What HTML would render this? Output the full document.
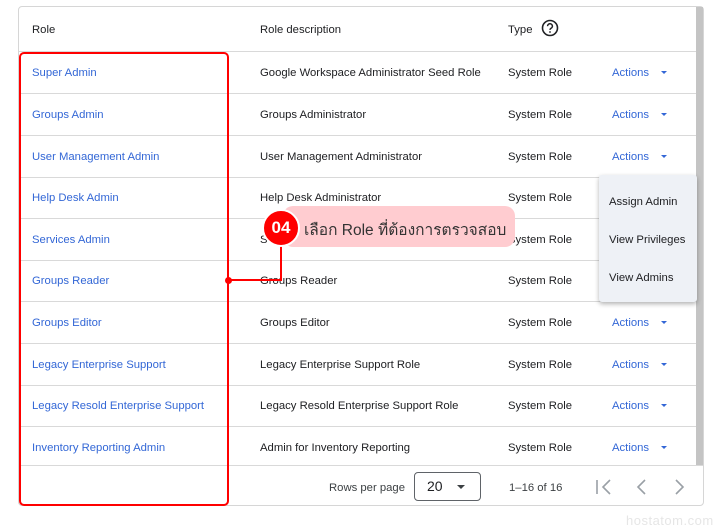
<!DOCTYPE html>
<html><head><meta charset="utf-8"><style>
*{margin:0;padding:0;box-sizing:border-box}
body{width:720px;height:531px;background:#fff;font-family:"Liberation Sans",sans-serif;font-size:11.3px;color:#202124;position:relative;overflow:hidden}
.card{position:absolute;left:18px;top:6px;width:686px;height:500px;border:1px solid #d6d6d6;border-radius:4px;overflow:hidden}
.sb{position:absolute;left:696px;top:7px;width:7px;height:458px;background:#c4c4c4}
.row{position:absolute;left:19px;width:677px;height:1px;background:#d9d9d9}
.t{position:absolute;white-space:nowrap;padding-top:2px}
.b{color:#3367d6}
.arr{position:absolute;width:0;height:0;border-left:3px solid transparent;border-right:3px solid transparent;border-top:3px solid #3367d6}
</style></head><body>
<div class="card"></div>
<div class="sb"></div>
<div class="t" style="left:32px;top:22px">Role</div>
<div class="t" style="left:260px;top:22px">Role description</div>
<div class="t" style="left:508px;top:22px">Type</div>
<svg style="position:absolute;left:541px;top:19px" width="18" height="18" viewBox="0 0 18 18"><circle cx="9" cy="9" r="7.5" fill="none" stroke="#202124" stroke-width="1.6"/><path d="M6.6 7.2a2.4 2.4 0 1 1 3.4 2.1c-.7.4-1 .8-1 1.6" fill="none" stroke="#202124" stroke-width="1.5"/><circle cx="9" cy="13" r=".9" fill="#202124"/></svg>
<div class="row" style="top:51px"></div><div class="row" style="top:93px"></div><div class="row" style="top:135px"></div><div class="row" style="top:177px"></div><div class="row" style="top:218px"></div><div class="row" style="top:260px"></div><div class="row" style="top:301px"></div><div class="row" style="top:343px"></div><div class="row" style="top:385px"></div><div class="row" style="top:426px"></div><div class="row" style="top:465px;width:684px"></div>

<div class="t b" style="left:32px;top:65px">Super Admin</div><div class="t" style="left:260px;top:65px">Google Workspace Administrator Seed Role</div><div class="t" style="left:508px;top:65px">System Role</div><div class="t b" style="left:612px;top:65px">Actions</div><div class="arr" style="left:661px;top:71px"></div>
<div class="t b" style="left:32px;top:107px">Groups Admin</div><div class="t" style="left:260px;top:107px">Groups Administrator</div><div class="t" style="left:508px;top:107px">System Role</div><div class="t b" style="left:612px;top:107px">Actions</div><div class="arr" style="left:661px;top:113px"></div>
<div class="t b" style="left:32px;top:149px">User Management Admin</div><div class="t" style="left:260px;top:149px">User Management Administrator</div><div class="t" style="left:508px;top:149px">System Role</div><div class="t b" style="left:612px;top:149px">Actions</div><div class="arr" style="left:661px;top:155px"></div>
<div class="t b" style="left:32px;top:190px">Help Desk Admin</div><div class="t" style="left:260px;top:190px">Help Desk Administrator</div><div class="t" style="left:508px;top:190px">System Role</div>
<div class="t b" style="left:32px;top:232px">Services Admin</div><div class="t" style="left:260px;top:232px">S</div><div class="t" style="left:508px;top:232px">System Role</div>
<div class="t b" style="left:32px;top:273px">Groups Reader</div><div class="t" style="left:260px;top:273px">Groups Reader</div><div class="t" style="left:508px;top:273px">System Role</div>
<div class="t b" style="left:32px;top:315px">Groups Editor</div><div class="t" style="left:260px;top:315px">Groups Editor</div><div class="t" style="left:508px;top:315px">System Role</div><div class="t b" style="left:612px;top:315px">Actions</div><div class="arr" style="left:661px;top:321px"></div>
<div class="t b" style="left:32px;top:357px">Legacy Enterprise Support</div><div class="t" style="left:260px;top:357px">Legacy Enterprise Support Role</div><div class="t" style="left:508px;top:357px">System Role</div><div class="t b" style="left:612px;top:357px">Actions</div><div class="arr" style="left:661px;top:363px"></div>
<div class="t b" style="left:32px;top:398px">Legacy Resold Enterprise Support</div><div class="t" style="left:260px;top:398px">Legacy Resold Enterprise Support Role</div><div class="t" style="left:508px;top:398px">System Role</div><div class="t b" style="left:612px;top:398px">Actions</div><div class="arr" style="left:661px;top:404px"></div>
<div class="t b" style="left:32px;top:440px">Inventory Reporting Admin</div><div class="t" style="left:260px;top:440px">Admin for Inventory Reporting</div><div class="t" style="left:508px;top:440px">System Role</div><div class="t b" style="left:612px;top:440px">Actions</div><div class="arr" style="left:661px;top:446px"></div>

<div class="t" style="left:329px;top:480px;color:#3c4043">Rows per page</div>
<div style="position:absolute;left:414px;top:472px;width:67px;height:29px;border:1px solid #5f6368;border-radius:4px"></div>
<div class="t" style="left:427px;top:476px;font-size:14px">20</div>
<div class="arr" style="left:457px;top:485px;border-top-color:#3c4043;border-left-width:4px;border-right-width:4px;border-top-width:4px"></div>
<div class="t" style="left:509px;top:480px;color:#3c4043">1–16 of 16</div>
<svg style="position:absolute;left:594px;top:478px" width="100" height="18"><g fill="none" stroke="#9aa0a6" stroke-width="1.6"><path d="M3 2v14M16 2l-7 7 7 7"/><path d="M51 2l-7 7 7 7"/><path d="M82 2l7 7-7 7"/></g></svg>

<div style="position:absolute;left:599px;top:175px;width:98px;height:127px;background:#eef1f6;border-radius:3px;box-shadow:0 2px 5px rgba(0,0,0,.3)"></div>
<div class="t" style="left:609px;top:194px">Assign Admin</div>
<div class="t" style="left:609px;top:232px">View Privileges</div>
<div class="t" style="left:609px;top:270px">View Admins</div>

<div style="position:absolute;left:19px;top:52px;width:210px;height:454px;border:2px solid #f00;border-radius:5px"></div>
<div style="position:absolute;left:280px;top:240px;width:2px;height:41px;background:#f00"></div>
<div style="position:absolute;left:228px;top:279px;width:54px;height:2px;background:#f00"></div>
<div style="position:absolute;left:225px;top:277px;width:7px;height:7px;border-radius:50%;background:#f00"></div>
<div style="position:absolute;left:283px;top:206px;width:232px;height:41px;background:#ffccd0;border-radius:10px"></div>
<div class="t" style="left:304px;top:215px;font-size:15.5px;font-family:'Liberation Sans','Noto Sans CJK SC',sans-serif;color:#333">เลือก Role ที่ต้องการตรวจสอบ</div>
<div style="position:absolute;left:262px;top:209px;width:38px;height:38px;border-radius:50%;background:#f00;border:2px solid #fff;color:#fff;font-weight:bold;font-size:17px;text-align:center;line-height:34px">04</div>
<div class="t" style="left:626px;top:511px;font-size:13px;color:#e6e6e6;letter-spacing:.5px">hostatom.com</div>
</body></html>
